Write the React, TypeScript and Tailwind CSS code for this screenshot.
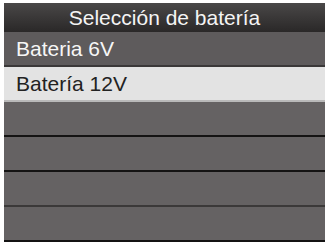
import React from 'react';

const rows: { label: string; tone: 'dark' | 'light' | 'empty'; line: string }[] = [
    { label: 'Bateria 6V', tone: 'dark', line: 'border-[#3a3838]' },
    { label: 'Batería 12V', tone: 'light', line: 'border-[#b9b9b9]' },
    { label: '', tone: 'empty', line: 'border-[#141313]' },
    { label: '', tone: 'empty', line: 'border-[#141313]' },
    { label: '', tone: 'empty', line: 'border-[#3b3939]' },
    { label: '', tone: 'empty', line: 'border-[#141313]' },
];

const App: React.FC = () => {
    return (
        <div
            className="w-[326px] h-[242px] bg-white pt-[3px] pl-[4px] pr-[1px] overflow-hidden"
            style={{ fontFamily: '"Liberation Sans", Arial, sans-serif' }}
        >
            {/* Title bar */}
            <div className="h-[29px] flex items-center justify-center bg-gradient-to-b from-[#4a4848] to-[#2a2828] text-[#f4f4f4] text-[21px] leading-none">
                Selección de batería
            </div>

            {/* Menu list */}
            <div className="flex flex-col">
                {rows.map((row, i) => (
                    <div
                        key={i}
                        className={`h-[35px] flex items-center pl-[12px] text-[21px] leading-none border-b-2 ${row.line} ${
                            row.tone === 'dark'
                                ? 'bg-[#5e5b5c] text-[#f6f6f6]'
                                : row.tone === 'light'
                                ? 'bg-[#e3e3e3] text-[#222222]'
                                : 'bg-[#656263]'
                        }`}
                    >
                        {row.label}
                    </div>
                ))}
            </div>
        </div>
    );
};

export default App;
